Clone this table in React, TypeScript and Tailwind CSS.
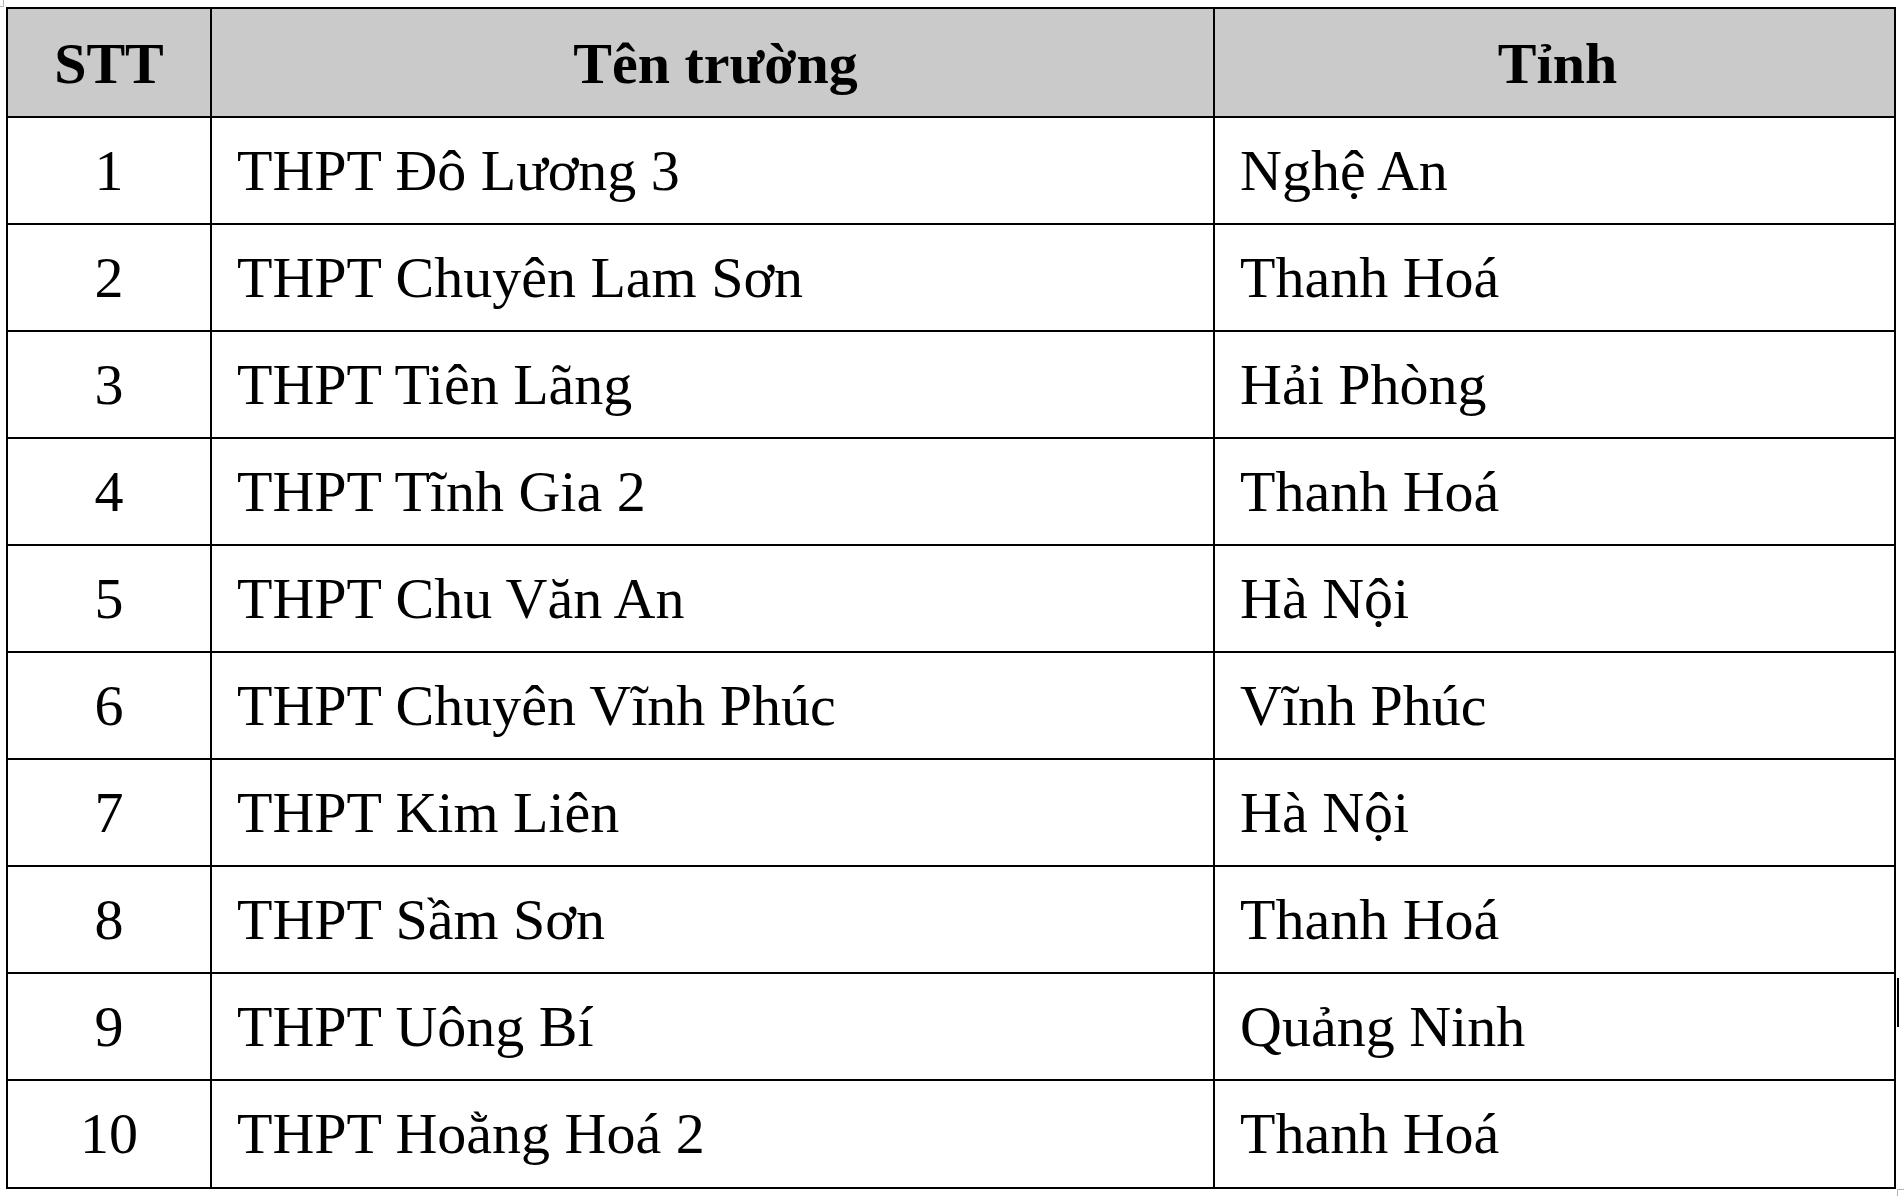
import React from "react";

const rows: [string, string, string][] = [
  ["1", "THPT Đô Lương 3", "Nghệ An"],
  ["2", "THPT Chuyên Lam Sơn", "Thanh Hoá"],
  ["3", "THPT Tiên Lãng", "Hải Phòng"],
  ["4", "THPT Tĩnh Gia 2", "Thanh Hoá"],
  ["5", "THPT Chu Văn An", "Hà Nội"],
  ["6", "THPT Chuyên Vĩnh Phúc", "Vĩnh Phúc"],
  ["7", "THPT Kim Liên", "Hà Nội"],
  ["8", "THPT Sầm Sơn", "Thanh Hoá"],
  ["9", "THPT Uông Bí", "Quảng Ninh"],
  ["10", "THPT Hoằng Hoá 2", "Thanh Hoá"],
];

export default function App() {
  return (
    <div
      className="relative w-[1904px] h-[1196px] bg-white text-black overflow-hidden pl-[6px] pt-[7px]"
      style={{ fontFamily: '"Liberation Serif", "Times New Roman", serif' }}
    >
      {/* selection corner artifacts */}
      <div className="absolute left-0 top-0 w-[4px] h-[7px] border-r border-b border-[#b5b5b5] rounded-br-[1px]" />
      <div className="absolute left-[1897px] top-[1189px] w-[8px] h-[8px] border-l border-t border-[#b5b5b5] rounded-tl-[1px]" />
      <div className="absolute left-[1897px] top-[978px] w-[2px] h-[49px] bg-black" />

      <div className="w-[1890px] border-2 border-black flex flex-col">
        {/* header */}
        <div className="grid grid-cols-[204px_1003px_1fr] h-[109px] bg-[#cacaca] border-b-2 border-black text-[58px] font-bold leading-none">
          <div className="flex items-center justify-center border-r-2 border-black pt-[2px]">STT</div>
          <div className="flex items-center justify-center border-r-2 border-black pt-[2px] pl-[6px]">Tên trường</div>
          <div className="flex items-center justify-center pt-[2px] pl-[6px]">Tỉnh</div>
        </div>
        {rows.map((r, i) => (
          <div
            key={r[0]}
            className={
              i < rows.length - 1
                ? "grid grid-cols-[204px_1003px_1fr] h-[107px] border-b-2 border-black text-[58px] leading-none"
                : "grid grid-cols-[204px_1003px_1fr] h-[106px] text-[58px] leading-none"
            }
          >
            <div className="flex items-center justify-center border-r-2 border-black">{r[0]}</div>
            <div className="flex items-center pl-[25px] border-r-2 border-black whitespace-nowrap">{r[1]}</div>
            <div className="flex items-center pl-[25px] whitespace-nowrap">{r[2]}</div>
          </div>
        ))}
      </div>
    </div>
  );
}
